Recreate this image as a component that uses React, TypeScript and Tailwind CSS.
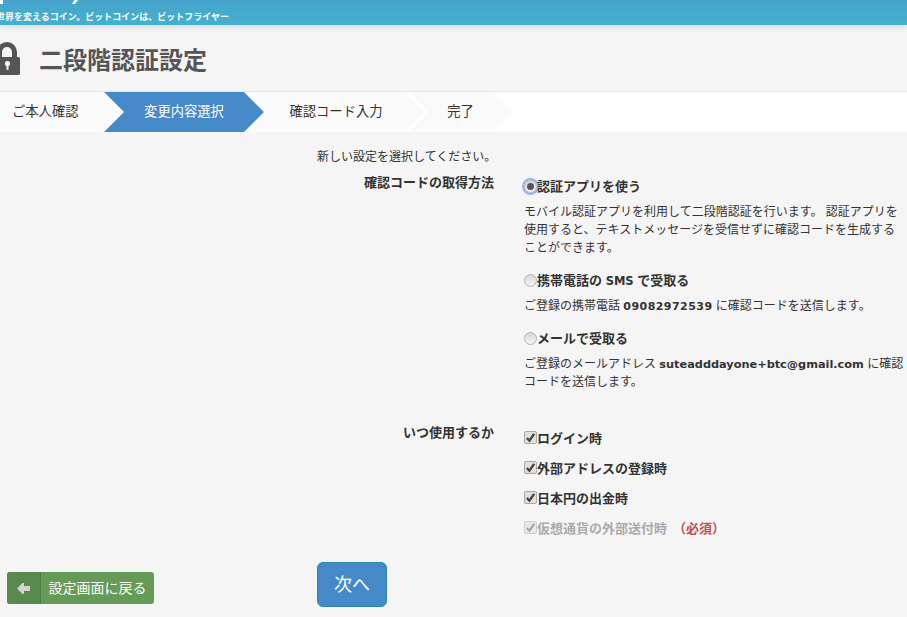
import React from "react";

const font = "[font-family:'Liberation_Sans','Noto_Sans_CJK_JP',sans-serif]";
const latin = "font-bold leading-none [font-family:'DejaVu_Sans','Noto_Sans_CJK_JP',sans-serif]";

function Radio({ checked }: { checked?: boolean }) {
  return (
    <span className={`-mt-[2px] flex h-[13px] w-[13px] shrink-0 items-center justify-center rounded-full border border-[#b5b5b5] bg-gradient-to-b from-[#d8d8d8] to-[#f4f4f4] ${checked ? "rounded-[3px] outline-2 outline-[#8db5f0]" : ""}`}>
      {checked && <span className="block h-[7px] w-[7px] rounded-full bg-[#555]" />}
    </span>
  );
}

function Check({ disabled }: { disabled?: boolean }) {
  return (
    <span className={`-mt-[3px] flex h-[13px] w-[13px] shrink-0 items-center justify-center rounded-[2px] border ${disabled ? "border-[#d0d0d0] bg-[#e8e8e8]" : "border-[#a8a8a8] bg-[#e0e0e0]"}`}>
      <svg viewBox="0 0 12 12" className="h-[11px] w-[11px]">
        <path d="M2 6.5 L4.8 9.5 L10 2" fill="none" stroke={disabled ? "#a8a8a8" : "#444"} strokeWidth="2.6" />
      </svg>
    </span>
  );
}

function Step({ label, cls, active, first }: { label: string; cls: string; active?: boolean; first?: boolean }) {
  return (
    <div
      className={`flex h-full items-center text-[13.3px] ${cls} ${active ? "bg-[#4589c9] text-white" : "bg-[#fafafa] text-[#333]"} ${first ? "pl-3 [clip-path:polygon(0_0,calc(100%-20px)_0,100%_50%,calc(100%-20px)_100%,0_100%)]" : "-ml-[17px] justify-center [clip-path:polygon(0_0,calc(100%-20px)_0,100%_50%,calc(100%-20px)_100%,0_100%,20px_50%)]"}`}
    >
      {label}
    </div>
  );
}

function CheckRow({ label, disabled, extra }: { label: string; disabled?: boolean; extra?: boolean }) {
  return (
    <div className={`flex h-[18px] items-center text-[13px] font-bold ${disabled ? "text-[#aaa]" : "text-[#333]"}`}>
      <Check disabled={disabled} />
      <span>{label}</span>
      {extra && <span className="ml-[6px] text-[#c0504d]">（必須）</span>}
    </div>
  );
}

export default function App() {
  return (
    <div className={`h-[617px] w-[907px] overflow-hidden bg-[#f5f5f5] text-[#333] ${font}`}>
      <header className="relative h-[25px] bg-gradient-to-b from-[#47a3cc] to-[#44b1cc] shadow-[0_2px_6px_rgba(0,0,0,0.12)]">
        <div className="h-[4px] w-[3px] bg-white" />
        <svg viewBox="0 0 8 4" className="absolute top-0 left-[70px] h-[4px] w-[8px]">
          <path d="M8 0 L5 4 H2 L4.5 0Z" fill="#fff" />
        </svg>
        <div className="absolute top-[11px] -left-[4px] h-[13px] text-[9px] leading-[13px] font-bold whitespace-nowrap text-white">世界を変えるコイン。ビットコインは、ビットフライヤー</div>
      </header>

      <div className="flex h-[66px] items-center">
        <svg viewBox="0 0 20 33" className="mt-[1px] h-[33px] w-[20px] shrink-0 overflow-hidden">
          <path d="M-3 16V10A10 10 0 0 1 17 10V16H12V10A5 5 0 0 0 2 10V16Z" fill="#555" />
          <path d="M-3 15H18.5A1.5 1.5 0 0 1 20 16.5V31.5A1.5 1.5 0 0 1 18.5 33H-3Z" fill="#555" />
          <circle cx="7.5" cy="21.5" r="2.6" fill="#f5f5f5" />
          <path d="M6.5 22H8.5V28H6.5Z" fill="#f5f5f5" />
        </svg>
        <h1 className="mt-[6px] ml-[19px] text-2xl leading-none font-bold text-[#555]">二段階認証設定</h1>
      </div>

      <div className="flex h-[41px] border-t border-[#e5e5e5] bg-white">
        <Step first label="ご本人確認" cls="w-[121px]" />
        <Step active label="変更内容選択" cls="w-[160px]" />
        <Step label="確認コード入力" cls="w-[178px]" />
        <Step label="完了" cls="w-[105px]" />
      </div>

      <p className="mt-[16px] ml-[317px] text-xs leading-[18px]">新しい設定を選択してください。</p>

      <section className="mt-[8px] flex">
        <div className="w-[494px] text-right text-[13px] leading-[18px] font-bold">確認コードの取得方法</div>
        <div className="ml-[30px] w-[381px] text-xs leading-[18px]">
          <div className="mt-[4px] flex h-[18px] items-center text-[13px] font-bold"><Radio checked /><span>認証アプリを使う</span></div>
          <p className="mt-[7px]">モバイル認証アプリを利用して二段階認証を行います。 認証アプリを使用すると、テキストメッセージを受信せずに確認コードを生成することができます。</p>
          <div className="mt-[15px] flex h-[18px] items-center text-[13px] font-bold"><Radio /><span>携帯電話の <span className="text-[11.5px] leading-none [font-family:'DejaVu_Sans',sans-serif]">SMS</span> で受取る</span></div>
          <p className="mt-[7px]">ご登録の携帯電話 <b className={`${latin} text-[11px] tracking-[0.45px]`}>09082972539</b> に確認コードを送信します。</p>
          <div className="mt-[15px] flex h-[18px] items-center text-[13px] font-bold"><Radio /><span>メールで受取る</span></div>
          <p className="mt-[7px]">ご登録のメールアドレス <b className={`${latin} text-[11.3px]`}>suteadddayone+btc@gmail.com</b> に確認コードを送信します。</p>
        </div>
      </section>

      <section className="mt-[33px] flex">
        <div className="w-[494px] text-right text-[13px] leading-[18px] font-bold">いつ使用するか</div>
        <div className="mt-[6px] ml-[30px] flex flex-col gap-3">
          <CheckRow label="ログイン時" />
          <CheckRow label="外部アドレスの登録時" />
          <CheckRow label="日本円の出金時" />
          <CheckRow disabled extra label="仮想通貨の外部送付時" />
        </div>
      </section>

      <div className="mt-[24px] flex items-start">
        <button className="mt-[10px] ml-[7px] flex h-[32px] w-[147px] items-stretch overflow-hidden rounded-[3px] bg-[#659a57] text-sm text-white">
          <span className="flex w-[34px] items-center justify-center border-r border-[#4f7d44] bg-[#598a4d]">
            <svg viewBox="0 0 13 11" className="h-[11px] w-[13px]"><path d="M0 5.5 L5.5 0 H7 V3 H13 V8 H7 V11 H5.5Z" fill="#d4d4d4" /></svg>
          </span>
          <span className="flex flex-1 items-center justify-center">設定画面に戻る</span>
        </button>
        <button className="ml-[163px] h-[45px] w-[70px] rounded-md border border-[#2f86ad] bg-[#4589c9] text-lg text-white">次へ</button>
      </div>
    </div>
  );
}
